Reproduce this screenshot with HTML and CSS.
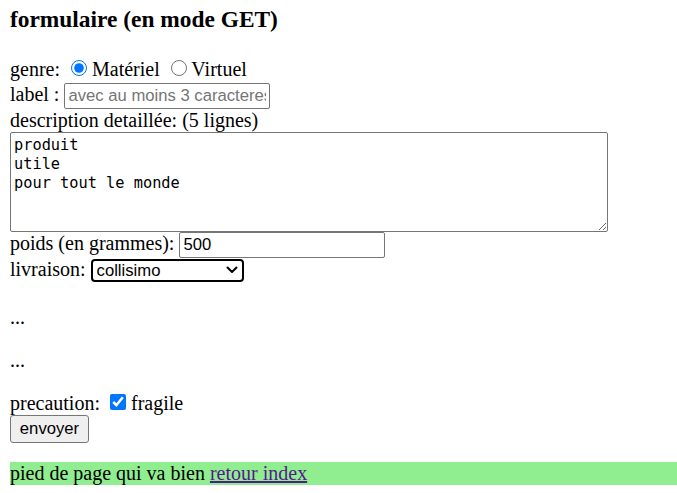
FILE: index.html
```html
<!DOCTYPE html>
<html lang="fr">
<head>
<meta charset="utf-8">
<title>formulaire</title>
<link rel="stylesheet" href="styles.css">
</head>
<body>
<h3 class="title">formulaire (en mode GET)</h3>
<form class="form" action="#" method="get">
genre: <input class="radio" type="radio" name="genre" value="m" checked> Matériel <input class="radio" type="radio" name="genre" value="v"> Virtuel<br>
label : <input class="text text-label" type="text" name="label" placeholder="avec au moins 3 caracteres"><br>
description detaillée: (5 lignes)<br>
<textarea class="area" name="description" rows="5" cols="80">produit
utile
pour tout le monde</textarea><br>
poids (en grammes): <input class="text" type="text" name="poids" value="500"><br>
livraison: <span class="select-wrap"><select class="select" name="livraison"><option>collisimo</option><option>chronopost</option></select><svg class="chev" width="12" height="8" viewBox="0 0 12 8"><path d="M1.5 1.5 L6 6 L10.5 1.5" fill="none" stroke="#000" stroke-width="2" stroke-linecap="round" stroke-linejoin="round"/></svg></span><br>
<p class="para para-first">...</p>
<p class="para para-second">...</p>
precaution: <input class="check" type="checkbox" name="fragile" checked> fragile<br>
<input class="btn" type="submit" value="envoyer">
</form>
<div class="footer">pied de page qui va bien <a class="link" href="#">retour index</a></div>
</body>
</html>
```

FILE: styles.css
```css
html, body {
  background: #fff;
}
body {
  margin: 0 0 0 10px;
  font-family: "Liberation Serif", "Times New Roman", serif;
  font-size: 20px;
  color: #000;
}
.title {
  font-size: 23.4px;
  font-weight: bold;
  margin: 6px 0 23.4px 0;
  line-height: 27px;
}
.form {
  margin: 0;
}
.radio {
  width: 16px;
  height: 16px;
  margin: 4px 0 0 6px;
  accent-color: #0075ff;
}
.text {
  font-family: "Liberation Sans", Arial, sans-serif;
  font-size: 16.67px;
  width: 206px;
  height: 26px;
  box-sizing: border-box;
  padding: 1px 3px;
  border: 1px solid #767676;
  border-radius: 2px;
  color: #000;
}
.text-label {
  margin-top: 2px;
}
.text::placeholder {
  color: #757575;
}
.area {
  font-family: "DejaVu Sans Mono", "Liberation Mono", monospace;
  font-size: 15.3px;
  line-height: 19px;
  width: 598px;
  height: 100px;
  box-sizing: border-box;
  padding: 3px 3px;
  margin: 0;
  border: 1px solid #767676;
  border-radius: 2px;
  vertical-align: bottom;
  resize: both;
}
.select-wrap {
  position: relative;
  display: inline-block;
}
.select {
  appearance: none;
  -webkit-appearance: none;
  font-family: "Liberation Sans", Arial, sans-serif;
  font-size: 16.67px;
  width: 153px;
  height: 23px;
  box-sizing: border-box;
  padding: 0 4px;
  border: 2px solid #000;
  border-radius: 4px;
  background: #fff;
  color: #000;
}
.chev {
  position: absolute;
  right: 6px;
  top: 8px;
  pointer-events: none;
}
.para {
  margin: 20px 0;
}
.para-first {
  margin-top: 24px;
}
.para-second {
  margin-bottom: 19px;
}
.check {
  width: 16px;
  height: 16px;
  margin: 3px 0 1px 5px;
  accent-color: #0075ff;
}
.btn {
  font-family: "Liberation Sans", Arial, sans-serif;
  font-size: 16.67px;
  width: 79px;
  height: 28px;
  box-sizing: border-box;
  padding: 1px 6px;
  margin: 0;
  background: #efefef;
  border: 1px solid #767676;
  border-radius: 3px;
  color: #000;
}
.footer {
  background: #90ee90;
  margin: 19px 0 0 0;
  line-height: 23px;
}
.link {
  color: #551a8b;
}
```
